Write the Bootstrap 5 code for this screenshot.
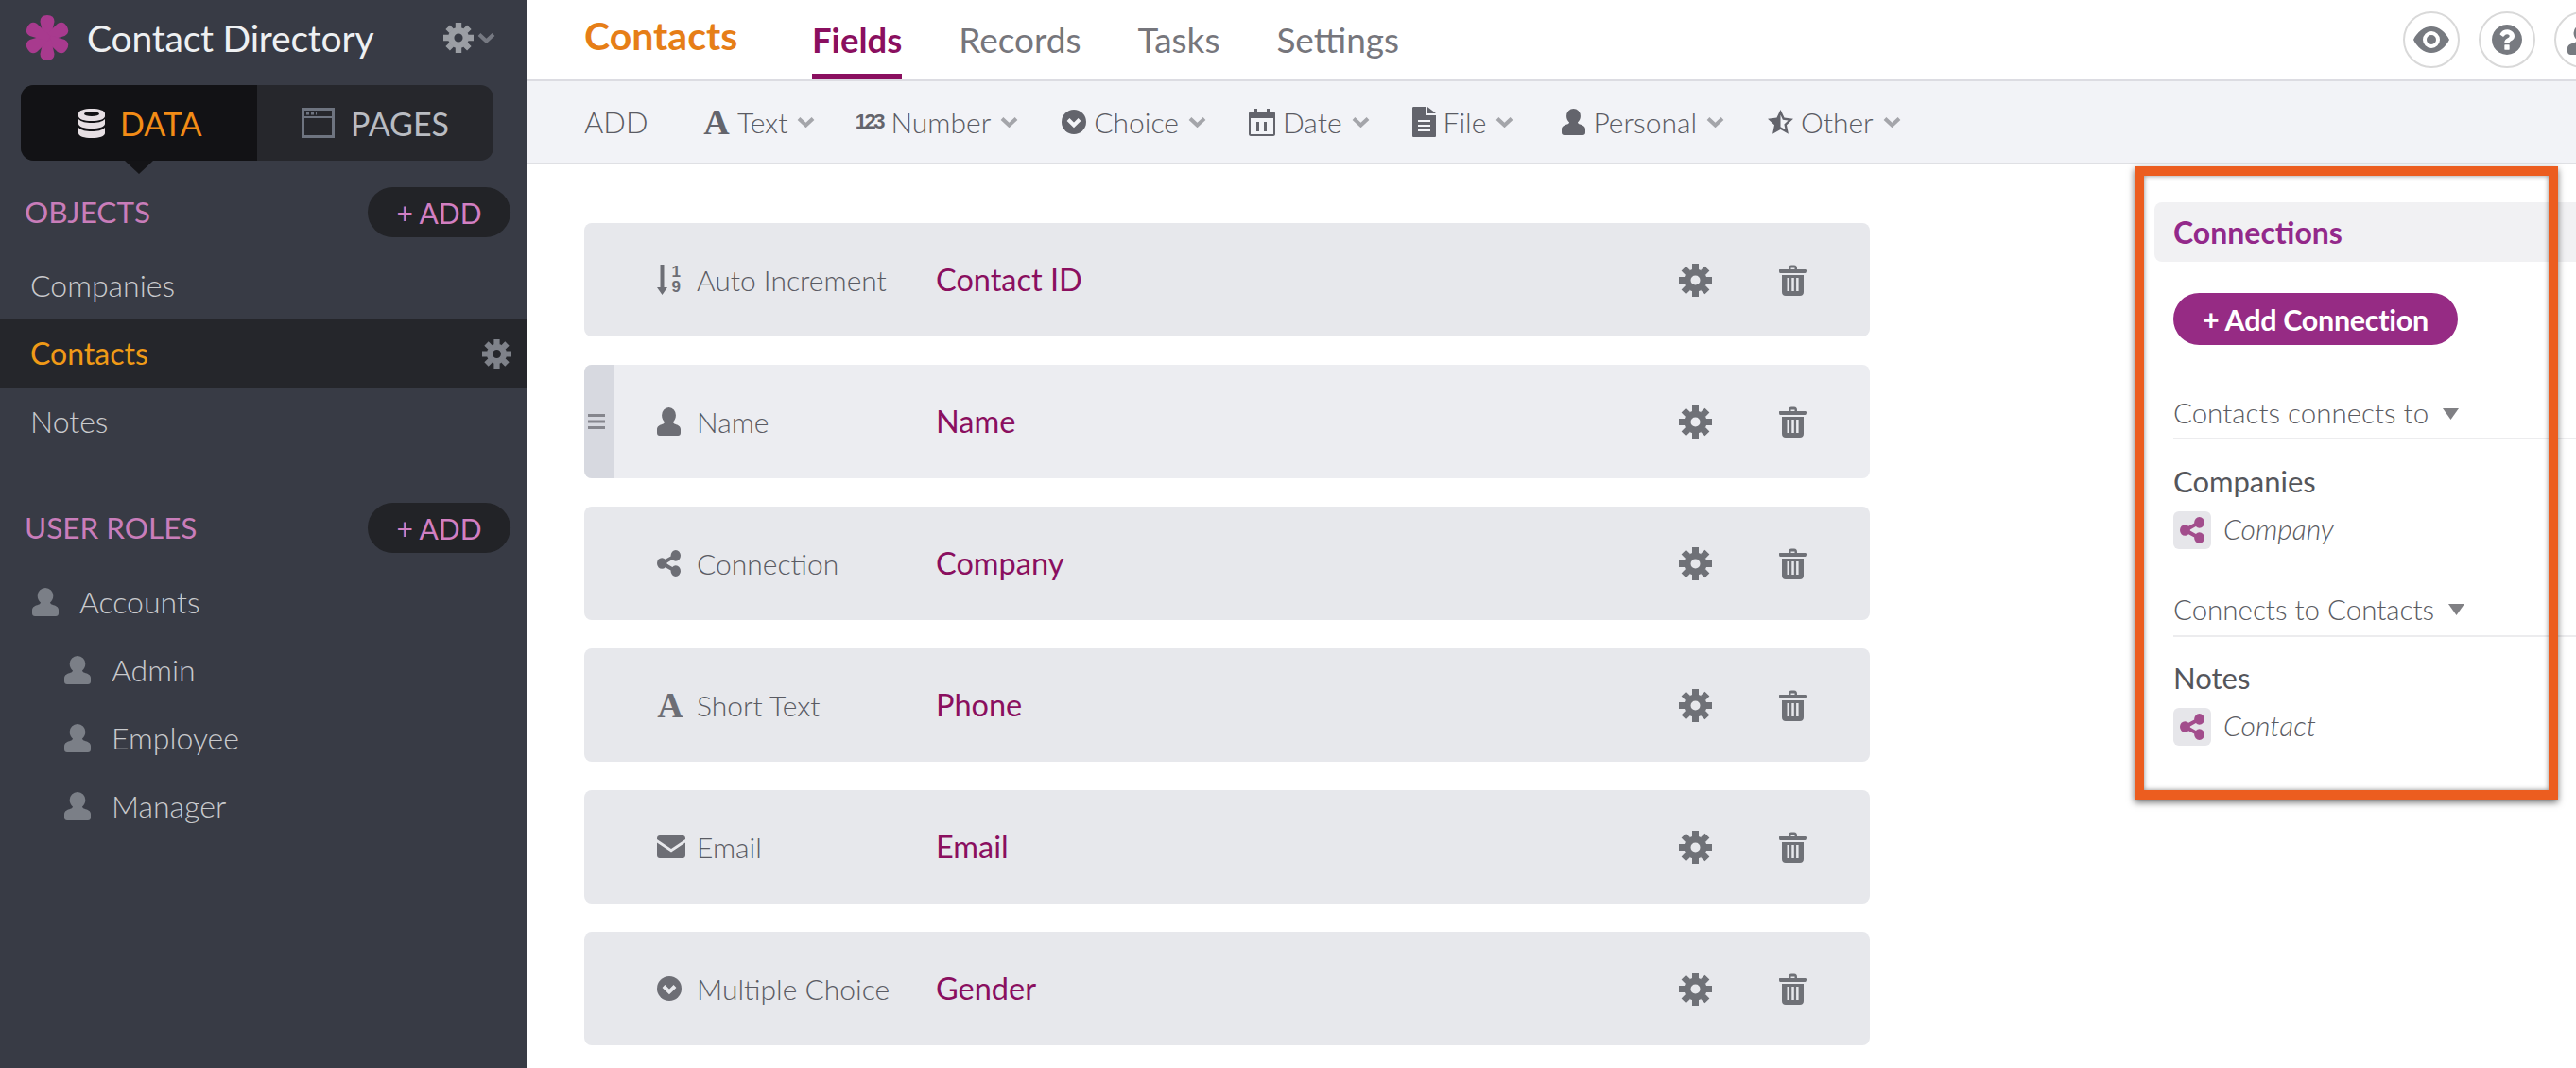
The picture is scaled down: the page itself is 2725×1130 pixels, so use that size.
<!doctype html>
<html lang="en"><head><meta charset="utf-8"><title>Contact Directory</title>
<link href="https://cdn.jsdelivr.net/npm/bootstrap@5.3.0/dist/css/bootstrap.min.css" rel="stylesheet">
<style>
html,body{height:1130px;overflow:hidden;background:#fff}
body{font-family:Lato,"Liberation Sans",sans-serif;color:#6c6d75;position:relative}
.shell{height:1130px;width:2725px}
.side{width:558px;background:#383b45;flex:none;height:1130px;color:#c9cacd;font-weight:300;font-size:32px}
.brandbar{height:90px;padding:0 34px 10px 27px}
.brandtxt{color:#eef0f2;font-size:39px;font-weight:400;margin-left:19px;letter-spacing:-.2px}
.sw{margin:0 36px 0 22px;height:80px;border-radius:14px;background:#26272c;position:relative}
.sw-a,.sw-b{width:250px;font-size:34px;font-weight:400}
.sw-a{background:#121215;color:#f28c16;border-radius:14px 0 0 14px;padding-left:61px}
.sw-b{color:#b9bcc2;padding-left:47px}
.sw-a svg{margin-right:16px}.sw-b svg{margin-right:17px}
.sw-tip{position:absolute;left:110px;top:80px;border:15px solid transparent;border-top:14px solid #141417;border-bottom:0}
.sechead{padding:0 18px 0 26px;color:#c97dba;font-size:31.500px;font-weight:400}
.s1{margin-top:28px;height:53px}.s2{margin-top:50px;height:53px}
.addpill{background:#222327;color:#d27fc2;width:151px;height:100%;border:0;border-radius:27px;font-size:30px;font-weight:400;padding:0;line-height:1}
.addpill:hover{background:#222327;color:#d27fc2}
.obj{height:72px;padding:0 17px 0 32px}
.obj.on{background:#25262b;color:#ef9a17;font-weight:400}
.obj-list{margin:15px 0 0}
.rl{gap:22px;padding-left:34px}.rl.sub{padding-left:68px}
.main{min-width:0;flex:1 1 auto}
.topbar{height:86px;border-bottom:2px solid #dcdce2;padding-left:60px;overflow:hidden;font-size:37px}
.ttl{color:#e67e17;font-weight:700;font-size:41px;width:241px;margin-top:-8px;flex:none}
.tb{color:#76767c;margin-right:60px;height:84px;line-height:84px;font-weight:400;flex:none;text-decoration:none}
.tb.on{color:#8a0f5f;font-weight:700;font-size:36.500px;border-bottom:6px solid #8a0f5f}
.circ{width:60px;height:60px;border:2px solid #d9d9d9;border-radius:50%;flex:none;margin-right:20px;background:#fff;overflow:hidden}
.circ-last{margin-right:-37px}
.toolbar{height:88px;background:#f2f3f7;border-bottom:2px solid #dfe0e4;padding-left:60px;font-size:30px;font-weight:300;color:#5a5b63}
.tadd{width:126px;font-size:31px}
.tool{margin-right:45px;color:#5a5b63}
.tool-text{margin-right:42px}.tool-num{margin-right:46px}.tool-file{margin-right:51px}.tool-per{margin-right:46px}
.tool .ic{margin-right:8px;display:inline-flex;align-items:center;justify-content:center}
.chev{margin-left:10px;color:#a4a5aa}
.glA{font-family:"Liberation Serif",serif;font-weight:700;font-size:38px;line-height:1;color:#63646c;width:28px;text-align:center}
.gl123{font-family:"Liberation Sans",sans-serif;font-weight:700;font-size:22px;letter-spacing:-2.500px;line-height:1;color:#63646c;width:30px}
.work{height:956px}
.flist{width:1360px;margin:62px 0 0 60px;flex:none}
.frow{height:120px;margin-bottom:30px;background:#e7e8ec;border-radius:8px;font-size:30px;font-weight:300;color:#5a5b63;overflow:hidden}
.frow.hov{background:#ecedf1}
.grip{width:32px;background:#d7d9e0;flex:none;align-self:stretch;padding-left:4px}
.fic{width:42px;margin-left:77px;flex:none;display:flex;align-items:center;height:40px;color:#6d6e75}
.fic .glA{color:#6d6e75}
.grip+.fic{margin-left:45px}
.fty{width:253px;flex:none;white-space:nowrap}
.fnm{color:#8a0f5f;font-weight:400;font-size:32.500px;flex:1 1 auto}
.acts{padding-right:67px;gap:71px;color:#6f7177}
.sort{position:relative;width:25px;height:32px;font-family:"Liberation Sans",sans-serif;font-weight:700;font-size:17px;line-height:16px;text-align:right;color:#6d6e75}
.panel{width:446px;margin-left:301px;margin-top:40px;flex:none}
.phead{height:63px;background:#f1f1f3;border-radius:8px 0 0 8px;padding-left:20px;color:#93298a;font-weight:700;font-size:32px}
.padd{margin:33px 0 0 20px;width:301px;height:55px;border:0;border-radius:28px;background:#962b84;color:#fff;font-size:30.500px;font-weight:700;padding:2px 0 0;letter-spacing:-.3px}
.padd:hover{background:#962b84;color:#fff}
.grp{margin-left:20px;height:55px;border-bottom:2px solid #ececee;font-size:29.500px;font-weight:300;color:#5a5b62}
.g1{margin-top:45px;padding-top:2px}.g2{margin-top:37px;height:56px}
.grp svg{margin-left:15px}
.gname{margin:25px 0 0 20px;height:40px;font-size:31px;font-weight:400;color:#55565b;line-height:38px}
.g2+.gname{margin-top:24px}
.gsub{margin:11px 0 0 20px;font-style:italic;font-weight:300;font-size:30px;color:#5a5b62;height:40px}
.gsub-t{padding-bottom:3px}
.shbox{width:40px;height:40px;background:#e6e6ea;border-radius:6px;margin-right:13px;color:#a24d8c}
.mark-box{position:absolute;left:2258px;top:176px;width:448px;height:670px;border:10px solid #ec5d1f;box-shadow:0 3px 7px rgba(0,0,0,.55),inset 0 0 5px rgba(0,0,0,.45);pointer-events:none}
.i-brandgear{color:#9b9ea4}.i-brandchev{color:#767982}.i-rowgear{color:#7f828a}.i-role{color:#7b7f87}.i-top{color:#777a80}.i-tool{color:#63646c}
</style></head>
<body>
<svg width="0" height="0" class="position-absolute">
<defs>
<symbol id="gear" viewBox="-17.500 -17.500 35 35"><circle r="8.500" fill="none" stroke="currentColor" stroke-width="7"/><path fill="none" stroke="currentColor" stroke-width="7" d="M0-17.500V-11M0 17.500V11M-17.500 0H-11M17.500 0H11M-12.400-12.400L-8-8M12.400 12.400L8 8M-12.400 12.400L-8 8M12.400-12.400L8-8"/></symbol>
<symbol id="trash" viewBox="0 0 29 33"><path fill="currentColor" fill-rule="evenodd" d="M10 5V4c0-2 1-3.500 3-3.500h3c2 0 3 1.500 3 3.500v1h8.500c1 0 1.500.5 1.500 1.500S28.500 9 27.500 9h-26C.5 9 0 8.500 0 6.500S.5 5 1.500 5zm2.500 0h4V3.500h-4zM3 11h23v18c0 2.500-1.500 4-4 4H7c-2.500 0-4-1.500-4-4zm5.500 3v14h2.500V14zm4.800 0v14h2.500V14zm4.800 0v14h2.500V14z"/></symbol>
<symbol id="share" viewBox="128 128 1536 1536" preserveAspectRatio="none"><path fill="currentColor" d="M1344 1024q133 0 226.500 93.500t93.500 226.500-93.500 226.500-226.500 93.500-226.500-93.500-93.500-226.500q0-12 2-34l-360-180q-92 86-218 86-133 0-226.500-93.500t-93.500-226.500 93.500-226.500 226.500-93.500q126 0 218 86l360-180q-2-22-2-34 0-133 93.500-226.500t226.500-93.500 226.500 93.500 93.500 226.500-93.500 226.500-226.500 93.500q-126 0-218-86l-360 180q2 22 2 34t-2 34l360 180q92-86 218-86z"/></symbol>
<symbol id="user" viewBox="0 0 28 30" preserveAspectRatio="none"><path fill="currentColor" d="M14 0a8.300 8.300 0 0 1 8.300 8.500c0 3-1.500 5.500-3.300 7 .3 1.200 1.200 1.800 2.500 2.300 3 1 6.500 2.200 6.500 5.700v3.500c0 1.800-1.200 3-3 3H3c-1.800 0-3-1.200-3-3v-3.500c0-3.500 3.500-4.700 6.500-5.700 1.300-.5 2.200-1.100 2.500-2.300-1.800-1.500-3.300-4-3.300-7A8.300 8.300 0 0 1 14 0z"/></symbol>
<symbol id="chv" viewBox="0 0 19 12"><path fill="none" stroke="currentColor" stroke-width="4" d="M2 2.500l7.500 7 7.500-7"/></symbol>
<symbol id="cc" viewBox="0 0 26 26"><circle cx="13" cy="13" r="13" fill="currentColor"/><path fill="none" stroke="#f2f3f7" stroke-width="4" d="M7 10.500l6 6 6-6"/></symbol>
<symbol id="cc2" viewBox="0 0 26 26"><circle cx="13" cy="13" r="13" fill="currentColor"/><path fill="none" stroke="#e7e8ec" stroke-width="4" d="M7 10.500l6 6 6-6"/></symbol>
</defs>
</svg>
<div class="shell d-flex">
<aside class="side">
 <div class="brandbar d-flex align-items-center">
  <svg width="46" height="48" viewBox="-23 -24 46 48" aria-hidden="true"><g fill="#a83a8e"><path d="M-3 2L-7.500-17Q-7.500-24 0-24T7.500-17L3 2Z"/><path d="M-3 2L-7.500-17Q-7.500-24 0-24T7.500-17L3 2Z" transform="rotate(60)"/><path d="M-3 2L-7.500-17Q-7.500-24 0-24T7.500-17L3 2Z" transform="rotate(120)"/><path d="M-3 2L-7.500-17Q-7.500-24 0-24T7.500-17L3 2Z" transform="rotate(180)"/><path d="M-3 2L-7.500-17Q-7.500-24 0-24T7.500-17L3 2Z" transform="rotate(240)"/><path d="M-3 2L-7.500-17Q-7.500-24 0-24T7.500-17L3 2Z" transform="rotate(300)"/></g></svg>
  <span class="brandtxt flex-grow-1">Contact Directory</span>
  <svg width="32" height="32" class="i-brandgear"><use href="#gear"/></svg>
  <svg width="19" height="12" class="ms-1 i-brandchev"><use href="#chv"/></svg>
 </div>
 <div class="sw d-flex">
  <div class="sw-a d-flex align-items-center">
   <svg width="28" height="31" viewBox="0 0 28 31" aria-hidden="true"><path fill="#e6dfe3" d="M14 0c8 0 14 2 14 5v3c0 3-6 5-14 5S0 11 0 8V5c0-3 6-5 14-5zM0 11c3 3 8 4 14 4s11-1 14-4v5c0 3-6 5-14 5S0 19 0 16zM0 20c3 3 8 4 14 4s11-1 14-4v6c0 3-6 5-14 5S0 29 0 26z"/><ellipse cx="14" cy="5.500" rx="8" ry="2.500" fill="#121215"/></svg>
   <span>DATA</span></div>
  <div class="sw-b d-flex align-items-center">
   <svg width="35" height="32" viewBox="0 0 35 32" aria-hidden="true"><rect x="1.500" y="1.500" width="32" height="29" fill="none" stroke="#6e7480" stroke-width="3"/><path stroke="#6e7480" stroke-width="2" d="M2 10h31"/><path stroke="#6e7480" stroke-width="3" stroke-dasharray="3 2" d="M5 6h11"/></svg>
   <span>PAGES</span></div>
  <span class="sw-tip"></span>
 </div>
 <div class="sechead s1 d-flex align-items-center justify-content-between"><span>OBJECTS</span><button class="btn addpill">+ ADD</button></div>
 <ul class="list-unstyled obj-list">
  <li class="obj d-flex align-items-center">Companies</li>
  <li class="obj on d-flex align-items-center justify-content-between"><span>Contacts</span><svg width="31" height="31" class="i-rowgear"><use href="#gear"/></svg></li>
  <li class="obj d-flex align-items-center">Notes</li>
 </ul>
 <div class="sechead s2 d-flex align-items-center justify-content-between"><span>USER ROLES</span><button class="btn addpill">+ ADD</button></div>
 <ul class="list-unstyled obj-list mt-3">
  <li class="obj rl d-flex align-items-center"><svg width="28" height="30" class="i-role"><use href="#user"/></svg>Accounts</li>
  <li class="obj rl sub d-flex align-items-center"><svg width="28" height="30" class="i-role"><use href="#user"/></svg>Admin</li>
  <li class="obj rl sub d-flex align-items-center"><svg width="28" height="30" class="i-role"><use href="#user"/></svg>Employee</li>
  <li class="obj rl sub d-flex align-items-center"><svg width="28" height="30" class="i-role"><use href="#user"/></svg>Manager</li>
 </ul>
</aside>
<main class="main">
 <header class="topbar d-flex align-items-center">
  <span class="ttl">Contacts</span>
  <a class="tb on" href="#">Fields</a><a class="tb" href="#">Records</a><a class="tb" href="#">Tasks</a><a class="tb" href="#">Settings</a>
  <div class="ms-auto d-flex align-items-center">
   <span class="circ d-flex align-items-center justify-content-center"><svg width="38" height="28" viewBox="0 0 38 28" aria-hidden="true"><path fill="#777a80" fill-rule="evenodd" d="M0 14C4 6 11 0 19 0s15 6 19 14c-4 8-11 14-19 14S4 22 0 14zm19-9a9 9 0 1 0 0 18 9 9 0 0 0 0-18zm0 4a5 5 0 1 1 0 10 5 5 0 0 1 0-10z"/></svg></span>
   <span class="circ d-flex align-items-center justify-content-center"><svg width="32" height="32" viewBox="128 128 1536 1536" aria-hidden="true"><path fill="#777a80" d="M1024 1376v-192q0-14-9-23t-23-9h-192q-14 0-23 9t-9 23v192q0 14 9 23t23 9h192q14 0 23-9t9-23zm256-672q0-88-55.500-163t-138.500-116-170-41q-243 0-371 213-15 24 8 42l132 100q7 6 19 6 16 0 25-12 53-68 86-92 34-24 86-24 48 0 85.500 26t37.500 59q0 38-20 61t-68 45q-63 28-115.500 86.500t-52.500 125.500v36q0 14 9 23t23 9h192q14 0 23-9t9-23q0-19 21.500-49.500t54.500-49.500q32-18 49-28.500t46-35 44.500-48 28-60.500 12.500-81zm384 192q0 209-103 385.500t-279.500 279.500-385.500 103-385.500-103-279.500-279.500-103-385.500 103-385.500 279.500-279.500 385.500-103 385.500 103 279.500 279.500 103 385.500z"/></svg></span>
   <span class="circ circ-last d-flex align-items-center justify-content-center"><svg width="32" height="32" class="i-top"><use href="#user"/></svg></span>
  </div>
 </header>
 <div class="toolbar d-flex align-items-center">
  <span class="tadd">ADD</span>
  <span class="tool tool-text d-flex align-items-center"><span class="ic glA">A</span>Text<svg class="chev" width="19" height="12"><use href="#chv"/></svg></span>
  <span class="tool tool-num d-flex align-items-center"><span class="ic gl123">123</span>Number<svg class="chev" width="19" height="12"><use href="#chv"/></svg></span>
  <span class="tool d-flex align-items-center"><span class="ic"><svg width="26" height="26" class="i-tool"><use href="#cc"/></svg></span>Choice<svg class="chev" width="19" height="12"><use href="#chv"/></svg></span>
  <span class="tool d-flex align-items-center"><span class="ic"><svg width="28" height="30" viewBox="0 0 28 30" aria-hidden="true"><path fill="#63646c" fill-rule="evenodd" d="M2 4h4V1h3v3h10V1h3v3h4c1 0 2 1 2 2v22c0 1-1 2-2 2H2c-1 0-2-1-2-2V6c0-1 1-2 2-2zm0 7v17h24V11z"/><path fill="#63646c" d="M8 15h3v10H8zM16 15h3v10h-3z"/></svg></span>Date<svg class="chev" width="19" height="12"><use href="#chv"/></svg></span>
  <span class="tool tool-file d-flex align-items-center"><span class="ic"><svg width="25" height="32" viewBox="0 0 25 32" aria-hidden="true"><path fill="#63646c" d="M0 1.500C0 .5.500 0 1.500 0H14v9h11v21.500c0 1-.5 1.500-1.500 1.500h-22C.5 32 0 31.500 0 30.500zM16 0l9 7h-9z"/><path stroke="#f2f3f7" stroke-width="2" d="M6 15h13M6 20h13M6 25h13"/></svg></span>File<svg class="chev" width="19" height="12"><use href="#chv"/></svg></span>
  <span class="tool tool-per d-flex align-items-center"><span class="ic"><svg width="25" height="28" class="i-tool"><use href="#user"/></svg></span>Personal<svg class="chev" width="19" height="12"><use href="#chv"/></svg></span>
  <span class="tool d-flex align-items-center"><span class="ic"><svg width="27" height="27" viewBox="0 0 27 27" aria-hidden="true"><path fill="#63646c" d="M13.500 0l4 8.600 9.500 1.200-7 6.500 1.900 9.400-8.400-4.700-8.400 4.700 1.900-9.400-7-6.500 9.500-1.200z"/><path fill="#f2f3f7" d="M13.500 5.500v12.800l5 2.800-1.100-5.700 4.200-3.900-5.700-.7z"/></svg></span>Other<svg class="chev" width="19" height="12"><use href="#chv"/></svg></span>
 </div>
 <div class="work d-flex">
  <div class="flist">
   <div class="frow d-flex align-items-center"><span class="fic"><span class="sort d-block"><svg class="position-absolute top-0 start-0" width="11" height="32" viewBox="0 0 11 32" aria-hidden="true"><path fill="#6d6e75" d="M3.500 0h4v24H11l-5.500 8L0 24h3.500z"/></svg>1<br>9</span></span><span class="fty">Auto Increment</span><span class="fnm">Contact ID</span><span class="acts d-flex align-items-center"><svg width="35" height="35"><use href="#gear"/></svg><svg width="29" height="33"><use href="#trash"/></svg></span></div>
   <div class="frow hov d-flex align-items-center"><span class="grip d-flex align-items-center"><svg width="18" height="16" viewBox="0 0 18 16" aria-hidden="true"><path stroke="#85868d" stroke-width="3" d="M0 1.500h18M0 8h18M0 14.500h18"/></svg></span><span class="fic"><svg width="25" height="30"><use href="#user"/></svg></span><span class="fty">Name</span><span class="fnm">Name</span><span class="acts d-flex align-items-center"><svg width="35" height="35"><use href="#gear"/></svg><svg width="29" height="33"><use href="#trash"/></svg></span></div>
   <div class="frow d-flex align-items-center"><span class="fic"><svg width="25" height="28"><use href="#share"/></svg></span><span class="fty">Connection</span><span class="fnm">Company</span><span class="acts d-flex align-items-center"><svg width="35" height="35"><use href="#gear"/></svg><svg width="29" height="33"><use href="#trash"/></svg></span></div>
   <div class="frow d-flex align-items-center"><span class="fic"><span class="glA">A</span></span><span class="fty">Short Text</span><span class="fnm">Phone</span><span class="acts d-flex align-items-center"><svg width="35" height="35"><use href="#gear"/></svg><svg width="29" height="33"><use href="#trash"/></svg></span></div>
   <div class="frow d-flex align-items-center"><span class="fic"><svg width="30" height="24" viewBox="0 0 30 24" aria-hidden="true"><path fill="#6d6e75" d="M3 0h24c1.700 0 3 1.300 3 3v1L15 14 0 4V3c0-1.700 1.300-3 3-3zM0 7.500l15 10 15-10V21c0 1.700-1.300 3-3 3H3c-1.700 0-3-1.300-3-3z"/></svg></span><span class="fty">Email</span><span class="fnm">Email</span><span class="acts d-flex align-items-center"><svg width="35" height="35"><use href="#gear"/></svg><svg width="29" height="33"><use href="#trash"/></svg></span></div>
   <div class="frow d-flex align-items-center"><span class="fic"><svg width="26" height="26"><use href="#cc2"/></svg></span><span class="fty">Multiple Choice</span><span class="fnm">Gender</span><span class="acts d-flex align-items-center"><svg width="35" height="35"><use href="#gear"/></svg><svg width="29" height="33"><use href="#trash"/></svg></span></div>
  </div>
  <section class="panel">
   <div class="phead d-flex align-items-center">Connections</div>
   <button class="btn padd d-block">+ Add Connection</button>
   <div class="grp g1 d-flex align-items-center"><span>Contacts connects to</span><svg width="17" height="12" viewBox="0 0 17 12" aria-hidden="true"><path fill="#808084" d="M0 0h17l-8.500 12z"/></svg></div>
   <div class="gname">Companies</div>
   <div class="gsub d-flex align-items-center"><span class="shbox d-flex align-items-center justify-content-center"><svg width="26" height="28"><use href="#share"/></svg></span><span class="gsub-t">Company</span></div>
   <div class="grp g2 d-flex align-items-center"><span>Connects to Contacts</span><svg width="17" height="12" viewBox="0 0 17 12" aria-hidden="true"><path fill="#808084" d="M0 0h17l-8.500 12z"/></svg></div>
   <div class="gname">Notes</div>
   <div class="gsub d-flex align-items-center"><span class="shbox d-flex align-items-center justify-content-center"><svg width="26" height="28"><use href="#share"/></svg></span><span class="gsub-t">Contact</span></div>
  </section>
 </div>
</main>
</div>
<div class="mark-box"></div>
<script src="https://cdn.jsdelivr.net/npm/bootstrap@5.3.0/dist/js/bootstrap.bundle.min.js"></script>
</body></html>
